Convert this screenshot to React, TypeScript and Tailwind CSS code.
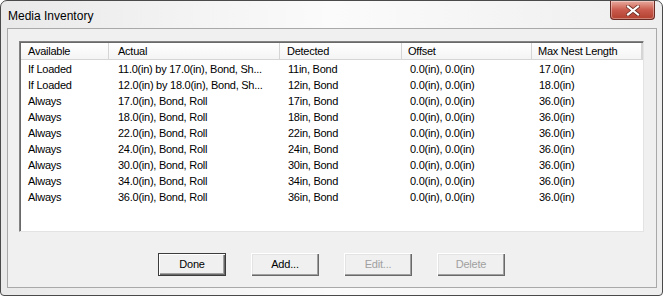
import React from 'react';

type Row = { avail: string; actual: string; detected: string; offset: string; max: string };

const rows: Row[] = [
  { avail: 'If Loaded', actual: '11.0(in) by 17.0(in), Bond, Sh...', detected: '11in, Bond', offset: '0.0(in), 0.0(in)', max: '17.0(in)' },
  { avail: 'If Loaded', actual: '12.0(in) by 18.0(in), Bond, Sh...', detected: '12in, Bond', offset: '0.0(in), 0.0(in)', max: '18.0(in)' },
  { avail: 'Always', actual: '17.0(in), Bond, Roll', detected: '17in, Bond', offset: '0.0(in), 0.0(in)', max: '36.0(in)' },
  { avail: 'Always', actual: '18.0(in), Bond, Roll', detected: '18in, Bond', offset: '0.0(in), 0.0(in)', max: '36.0(in)' },
  { avail: 'Always', actual: '22.0(in), Bond, Roll', detected: '22in, Bond', offset: '0.0(in), 0.0(in)', max: '36.0(in)' },
  { avail: 'Always', actual: '24.0(in), Bond, Roll', detected: '24in, Bond', offset: '0.0(in), 0.0(in)', max: '36.0(in)' },
  { avail: 'Always', actual: '30.0(in), Bond, Roll', detected: '30in, Bond', offset: '0.0(in), 0.0(in)', max: '36.0(in)' },
  { avail: 'Always', actual: '34.0(in), Bond, Roll', detected: '34in, Bond', offset: '0.0(in), 0.0(in)', max: '36.0(in)' },
  { avail: 'Always', actual: '36.0(in), Bond, Roll', detected: '36in, Bond', offset: '0.0(in), 0.0(in)', max: '36.0(in)' },
];

// column widths + left padding, taken from the dialog
const cols = [
  { label: 'Available', w: 'w-[88px]', pl: 'pl-[7px]' },
  { label: 'Actual', w: 'w-[171px]', pl: 'pl-[9px]' },
  { label: 'Detected', w: 'w-[122px]', pl: 'pl-[7px]' },
  { label: 'Offset', w: 'w-[130px]', pl: 'pl-[6px]' },
  { label: 'Max Nest Length', w: 'w-[110px]', pl: 'pl-[6px]' },
];

const DialogButton: React.FC<{ label: string; isDefault?: boolean; disabled?: boolean }> = ({ label, isDefault, disabled }) => (
  <button
    className={`w-[68px] h-[23px] bg-[#f0f0f0] text-[11px] leading-none tracking-[-0.2px] ${
      isDefault
        ? 'border border-[#3c3c3c] shadow-[inset_1px_1px_0_#ffffff,inset_-1px_-1px_0_#696969,inset_-2px_-2px_0_#a0a0a0]'
        : 'shadow-[inset_1px_1px_0_#ffffff,inset_-1px_-1px_0_#696969,inset_-2px_-2px_0_#a0a0a0,inset_2px_2px_0_#e3e3e3]'
    } ${disabled ? 'text-[#a0a0a0]' : 'text-black'}`}
  >
    {label}
  </button>
);

export default function App() {
  return (
    <div className="w-[663px] h-[296px] bg-white overflow-hidden" style={{ fontFamily: '"Liberation Sans", Arial, sans-serif' }}>
      <div className="w-[663px] h-[296px] rounded-t-[7px] rounded-b-[4px] border border-[#4a4a4a] bg-gradient-to-r from-[#e9e9e9] via-[#fbfbfb] to-[#eeeeee] flex flex-col">
        {/* title bar */}
        <div className="h-[27px] flex items-start justify-between">
          <div className="pl-[7px] pt-[6px] text-[12px] text-black">Media Inventory</div>
          <div className="mr-[7px] w-[45px] h-[19px] rounded-b-[4px] border border-t-0 border-[#6b2a22] bg-gradient-to-b from-[#e8aa9e] via-[#c95a4c] to-[#b3402f] flex items-center justify-center shadow-[inset_0_0_0_1px_rgba(255,255,255,0.35)]">
            <svg width="14" height="11" viewBox="0 0 14 11">
              <path d="M2 1.5 L12 9.5 M12 1.5 L2 9.5" stroke="#6a2a20" strokeWidth="3.6" strokeLinecap="square" />
              <path d="M2 1.5 L12 9.5 M12 1.5 L2 9.5" stroke="#ffffff" strokeWidth="2.2" strokeLinecap="square" />
            </svg>
          </div>
        </div>

        {/* client area */}
        <div className="ml-[6px] mr-[5px] h-[260px] border border-[#a9a9a9] bg-[#f0f0f0] flex flex-col">
          <div className="mt-[12px] ml-[11px] w-[625px] h-[191px] bg-white border-t border-l border-[#828282] border-r border-b border-r-[#e3e3e3] border-b-[#e3e3e3] shadow-[inset_1px_1px_0_#696969] flex flex-col tracking-[-0.25px]">
            {/* header */}
            <div className="h-[17px] ml-[1px] mt-[1px] flex bg-gradient-to-b from-white to-[#f4f4f4] border-b border-[#d5d5d5] text-[11px] text-black">
              {cols.map((c) => (
                <div key={c.label} className={`${c.w} ${c.pl} shrink-0 border-r border-[#d5d5d5] flex items-center`}>
                  {c.label}
                </div>
              ))}
              <div className="w-[2px] border-r border-[#d5d5d5]" />
            </div>
            {/* rows */}
            <div className="ml-[1px] pt-[1px] flex flex-col text-[11px] text-black">
              {rows.map((r, i) => (
                <div key={i} className="h-[16px] flex items-center whitespace-nowrap">
                  <div className="w-[89px] pl-[7px] shrink-0">{r.avail}</div>
                  <div className="w-[171px] pl-[8px] shrink-0">{r.actual}</div>
                  <div className="w-[122px] pl-[7px] shrink-0">{r.detected}</div>
                  <div className="w-[130px] pl-[7px] shrink-0">{r.offset}</div>
                  <div className="w-[110px] pl-[6px] shrink-0">{r.max}</div>
                </div>
              ))}
            </div>
          </div>

          {/* buttons */}
          <div className="mt-[21px] ml-[150px] flex gap-[25px]">
            <DialogButton label="Done" isDefault />
            <DialogButton label="Add..." />
            <DialogButton label="Edit..." disabled />
            <DialogButton label="Delete" disabled />
          </div>
        </div>
      </div>
    </div>
  );
}
